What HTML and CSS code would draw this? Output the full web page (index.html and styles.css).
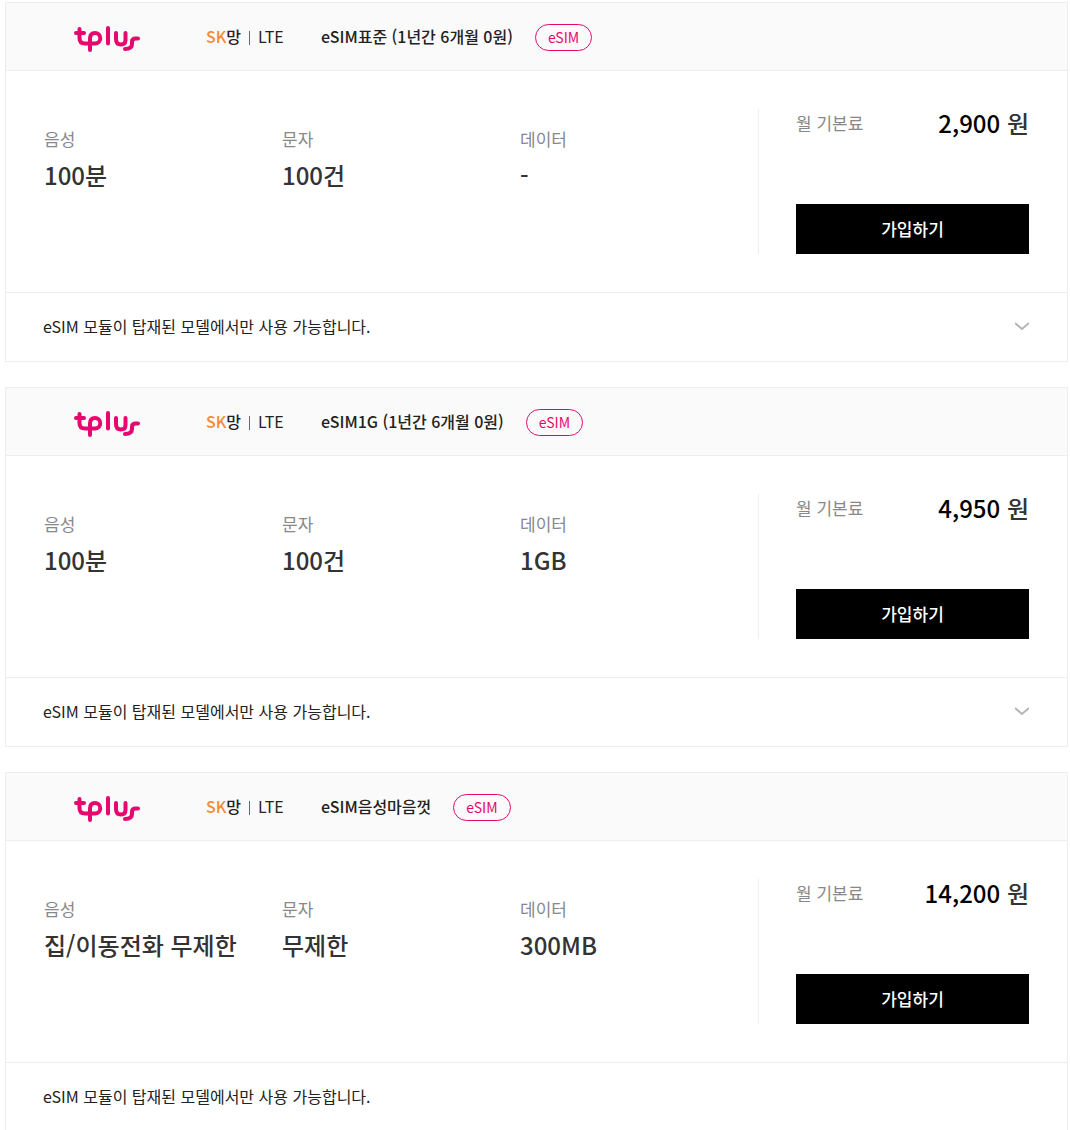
FILE: index.html
```html
<!DOCTYPE html>
<html lang="ko">

<head>
    <meta charset="UTF-8">
    <meta name="viewport" content="width=device-width, initial-scale=1">
    <title>tplus eSIM 요금제</title>
    <link rel="stylesheet" href="styles.css">
</head>

<body>
    <svg class="defs" width="0" height="0" aria-hidden="true">
        <symbol id="tplus" viewBox="0 0 68 30">
            <g fill="none" stroke="#e6086e" stroke-width="4" stroke-linecap="round" stroke-linejoin="round">
                <path d="M6.500 6V15Q6.500 20.500 12 20.500H22A5.200 5.200 0 0 0 22 10Q17 10 17 15.500V27" />
                <path d="M3 10H11" />
                <path d="M35 5V20.500" />
                <path d="M43 10V16Q43 21.500 48 21.500Q52.500 21.500 52.500 17V10" />
                <path d="M65 15.500H62.500Q59 15.500 59 19V21Q59 26 52 26" />
            </g>
        </symbol>
    </svg>

    <main class="plan-list">
        <article class="plan">
            <header class="plan-header">
                <svg class="logo" role="img" aria-label="tplus"><use href="#tplus" /></svg>
                <p class="network"><strong><em>SK</em>망</strong><span class="bar"></span>LTE</p>
                <h2>eSIM표준 (1년간 6개월 0원)</h2>
                <span class="badge">eSIM</span>
            </header>
            <div class="plan-body">
                <dl class="specs">
                    <div><dt>음성</dt><dd>100분</dd></div>
                    <div><dt>문자</dt><dd>100건</dd></div>
                    <div><dt>데이터</dt><dd>-</dd></div>
                </dl>
                <div class="fee">
                    <p class="fee-row"><span class="fee-label">월 기본료</span><span class="price"><b>2,900</b> 원</span></p>
                    <button class="join" type="button">가입하기</button>
                </div>
            </div>
            <div class="plan-note">
                <p>eSIM 모듈이 탑재된 모델에서만 사용 가능합니다.</p>
                <button class="more" type="button" aria-label="자세히 보기">
                    <svg width="14" height="10" viewBox="0 0 14 10"><path d="M0 2L7 8L14 2" /></svg>
                </button>
            </div>
        </article>

        <article class="plan">
            <header class="plan-header">
                <svg class="logo" role="img" aria-label="tplus"><use href="#tplus" /></svg>
                <p class="network"><strong><em>SK</em>망</strong><span class="bar"></span>LTE</p>
                <h2>eSIM1G (1년간 6개월 0원)</h2>
                <span class="badge">eSIM</span>
            </header>
            <div class="plan-body">
                <dl class="specs">
                    <div><dt>음성</dt><dd>100분</dd></div>
                    <div><dt>문자</dt><dd>100건</dd></div>
                    <div><dt>데이터</dt><dd>1GB</dd></div>
                </dl>
                <div class="fee">
                    <p class="fee-row"><span class="fee-label">월 기본료</span><span class="price"><b>4,950</b> 원</span></p>
                    <button class="join" type="button">가입하기</button>
                </div>
            </div>
            <div class="plan-note">
                <p>eSIM 모듈이 탑재된 모델에서만 사용 가능합니다.</p>
                <button class="more" type="button" aria-label="자세히 보기">
                    <svg width="14" height="10" viewBox="0 0 14 10"><path d="M0 2L7 8L14 2" /></svg>
                </button>
            </div>
        </article>

        <article class="plan">
            <header class="plan-header">
                <svg class="logo" role="img" aria-label="tplus"><use href="#tplus" /></svg>
                <p class="network"><strong><em>SK</em>망</strong><span class="bar"></span>LTE</p>
                <h2>eSIM음성마음껏</h2>
                <span class="badge">eSIM</span>
            </header>
            <div class="plan-body">
                <dl class="specs">
                    <div><dt>음성</dt><dd>집/이동전화 무제한</dd></div>
                    <div><dt>문자</dt><dd>무제한</dd></div>
                    <div><dt>데이터</dt><dd>300MB</dd></div>
                </dl>
                <div class="fee">
                    <p class="fee-row"><span class="fee-label">월 기본료</span><span class="price"><b>14,200</b> 원</span></p>
                    <button class="join" type="button">가입하기</button>
                </div>
            </div>
            <div class="plan-note">
                <p>eSIM 모듈이 탑재된 모델에서만 사용 가능합니다.</p>
            </div>
        </article>
    </main>
</body>

</html>
```
FILE: styles.css
```css
* {
    box-sizing: border-box;
}

body {
    margin: 0;
    background-color: #fff;
    color: #222;
    font-family: "Noto Sans CJK KR", "Noto Sans", sans-serif;
    font-size: 16px;
    line-height: 24px;
}

p,
h2,
dl,
dd {
    margin: 0;
}

button {
    border: none;
    padding: 0;
    font-family: inherit;
    cursor: pointer;
}

.defs {
    position: absolute;
}

.plan-list {
    display: grid;
    gap: 25px;
    padding: 2px 2px 0 5px;
}

.plan {
    border: 1px solid #eee;
}

.plan-header {
    display: flex;
    align-items: center;
    height: 68px;
    padding: 0 38px 2px;
    background-color: #fafafa;
    border-bottom: 1px solid #eee;
}

.logo {
    width: 68px;
    height: 30px;
    margin: 4px 65px 0 29px;
}

.network {
    display: flex;
    align-items: center;
    width: 115px;
}

.network strong {
    font-weight: 500;
}

.network em {
    color: #f58a34;
    font-style: normal;
}

.bar {
    width: 1px;
    height: 14px;
    margin: 4px 8px 0;
    background-color: #a3477a;
}

.plan-header h2 {
    font-size: 16px;
    font-weight: 500;
}

.badge {
    margin: 3px 0 0 22px;
    padding: 0 12px;
    border: 1px solid #e6086e;
    border-radius: 14px;
    color: #e6086e;
    font-size: 14px;
    line-height: 25px;
}

.plan-body {
    display: flex;
    padding: 38px;
}

.specs {
    display: grid;
    grid-template-columns: repeat(3, 1fr);
    flex: 1;
    padding-top: 18px;
}

.specs dt,
.fee-label {
    color: #888;
    font-size: 17px;
}

.specs dd {
    margin-top: 6px;
    color: #333;
    font-size: 24px;
    font-weight: 500;
    line-height: 36px;
}

.fee {
    display: flex;
    flex-direction: column;
    justify-content: space-between;
    width: 271px;
    height: 145px;
    padding-left: 37px;
    border-left: 1px solid #eee;
}

.fee-row {
    display: flex;
    justify-content: space-between;
    align-items: center;
}

.price {
    color: #333;
    font-size: 24px;
    font-weight: 500;
    line-height: 28px;
}

.price b {
    color: #000;
    font-weight: 500;
}

.join {
    height: 50px;
    padding-bottom: 2px;
    background-color: #000;
    color: #fff;
    font-size: 17px;
    font-weight: 500;
}

.plan-note {
    display: flex;
    justify-content: space-between;
    align-items: center;
    height: 69px;
    padding: 0 38px 3px 37px;
    border-top: 1px solid #eee;
}

.more {
    display: flex;
    background: none;
}

.more path {
    fill: none;
    stroke: #b5b5b5;
    stroke-width: 2;
}
```
